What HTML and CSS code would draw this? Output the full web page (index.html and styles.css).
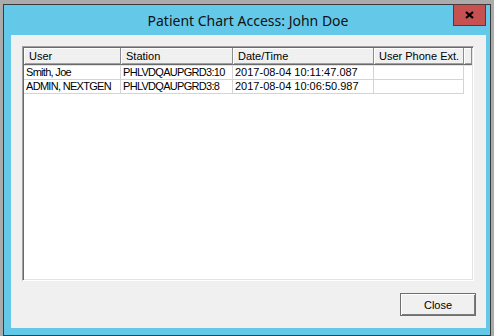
FILE: index.html
```html
<!DOCTYPE html>
<html lang="en">
<head>
  <meta charset="UTF-8" />
  <title>Patient Chart Access</title>
  <link rel="stylesheet" href="styles.css">
</head>
<body>
  <div class="window">
    <div class="titlebar">
      <span></span>
      <span class="title">Patient Chart Access: John Doe</span>
      <button class="caption-close" aria-label="Close">
        <svg viewBox="0 0 9 8" width="9" height="8" aria-hidden="true">
          <path d="M1 1L8 7M8 1L1 7" stroke="#000" stroke-width="2.2" fill="none"></path>
        </svg>
      </button>
    </div>

    <div class="client">
      <div class="listview">
        <table class="grid">
          <colgroup>
            <col class="c-user">
            <col class="c-station">
            <col class="c-date">
            <col class="c-phone">
            <col>
          </colgroup>
          <thead>
            <tr>
              <th>User</th>
              <th>Station</th>
              <th>Date/Time</th>
              <th>User Phone Ext.</th>
              <th class="filler"></th>
            </tr>
          </thead>
          <tbody>
            <tr>
              <td class="tight">Smith, Joe</td>
              <td class="tight">PHLVDQAUPGRD3:10</td>
              <td>2017-08-04 10:11:47.087</td>
              <td></td>
              <td class="filler"></td>
            </tr>
            <tr>
              <td class="tight">ADMIN, NEXTGEN</td>
              <td class="tight">PHLVDQAUPGRD3:8</td>
              <td>2017-08-04 10:06:50.987</td>
              <td></td>
              <td class="filler"></td>
            </tr>
          </tbody>
        </table>
      </div>

      <div class="actions">
        <button class="btn">Close</button>
      </div>
    </div>
  </div>
</body>
</html>
```

FILE: styles.css
```css
* { box-sizing: border-box; }
body {
  margin: 0;
  padding: 0;
  background: #ababab;
  font-family: "Liberation Sans", Arial, sans-serif;
  font-size: 11px;
  color: #000;
}

.window {
  margin: 4px 0 0 3px;
  width: 488px;
  height: 332px;
  border: 1px solid #3a3a3a;
  background: #64c8e9;
}

/* title bar */
.titlebar {
  height: 30px;
  display: grid;
  grid-template-columns: 1fr auto 1fr;
  align-items: center;
}
.title {
  font-family: "Noto Sans", "Open Sans", sans-serif;
  font-size: 14px;
  color: #111;
  padding-left: 2px;
}
.caption-close {
  justify-self: end;
  align-self: start;
  margin: -1px 4px 0 0;
  width: 33px;
  height: 22px;
  padding: 0;
  border: 1px solid #553838;
  background: #c75050;
  display: flex;
  align-items: center;
  justify-content: center;
}

/* client area */
.client {
  margin: 0 4px 0 7px;
  height: 293px;
  background: #f0f0f0;
  padding: 11px 10px 0 11px;
}

.listview {
  margin-right: 2px;
  height: 235px;
  background: #fff;
  border: 1px solid;
  border-color: #a0a0a0 #fff #fff #a0a0a0;
  box-shadow: inset 1px 1px 0 #696969, inset -1px -1px 0 #e3e3e3;
  padding: 1px;
}

.grid {
  border-collapse: separate;
  border-spacing: 0;
  table-layout: fixed;
  width: 100%;
}
.c-user { width: 97px; }
.c-station { width: 112px; }
.c-date { width: 141px; }
.c-phone { width: 90px; }

.grid th {
  height: 17px;
  padding: 0 0 1px 5px;
  text-align: left;
  font-weight: normal;
  background: #f0f0f0;
  border-right: 1px solid #8c8c8c;
  border-bottom: 1px solid #6a6a6a;
  box-shadow: inset 1px 1px 0 #fff, inset 0 -1px 0 #a0a0a0;
  white-space: nowrap;
  overflow: hidden;
}

.grid td {
  height: 14px;
  padding: 0 0 0 2px;
  line-height: 13px;
  border-right: 1px solid #d4d4d4;
  border-bottom: 1px solid #d4d4d4;
  white-space: nowrap;
  overflow: hidden;
}
.grid td.tight { letter-spacing: -0.7px; }
.grid tbody tr:first-child td { border-top: 1px solid #e2e2e2; }
.grid td.filler { border: none; }

/* bottom button */
.actions {
  display: flex;
  justify-content: flex-end;
  margin-top: 12px;
}
.btn {
  width: 76px;
  height: 23px;
  padding: 0;
  font-family: "Liberation Sans", Arial, sans-serif;
  font-size: 11px;
  color: #000;
  background: #f0f0f0;
  border: 1px solid #6e6e6e;
  box-shadow: inset 1px 1px 0 #fff, inset -1px -1px 0 #7a7a7a;
}
```
